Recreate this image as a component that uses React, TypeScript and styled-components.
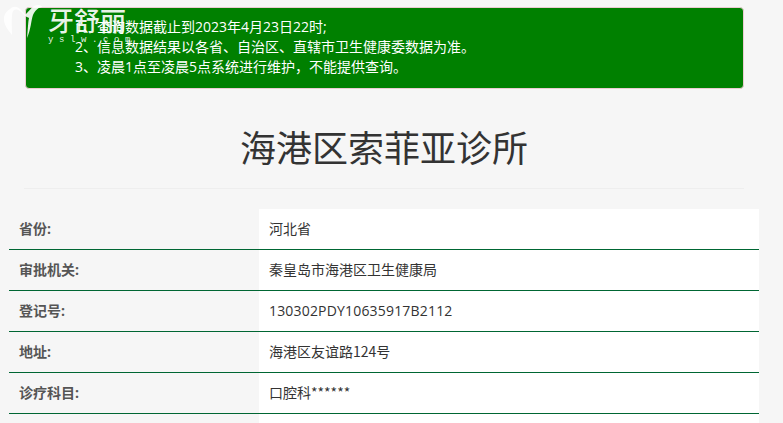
import React from 'react'
import styled, { createGlobalStyle } from 'styled-components'

interface InfoRow {
  label: string
  value: string
  code?: boolean
}

const rows: InfoRow[] = [
  { label: '省份:', value: '河北省' },
  { label: '审批机关:', value: '秦皇岛市海港区卫生健康局' },
  { label: '登记号:', value: '130302PDY10635917B2112', code: true },
  { label: '地址:', value: '海港区友谊路124号' },
  { label: '诊疗科目:', value: '口腔科******' },
  { label: '', value: '' },
]

const notices = [
  '1、查询数据截止到2023年4月23日22时;',
  '2、信息数据结果以各省、自治区、直辖市卫生健康委数据为准。',
  '3、凌晨1点至凌晨5点系统进行维护，不能提供查询。',
]

const GlobalStyle = createGlobalStyle`
  html, body {
    margin: 0;
    height: 423px;
    overflow: hidden;
    background-color: #f6f6f6;
    font-family: "Open Sans", "Noto Sans CJK SC", sans-serif;
    color: #333;
  }
`

const Page = styled.div`
  position: relative;
  padding-top: 7px;
`

const Logo = styled.div`
  position: absolute;
  top: 2px;
  left: 2px;
  display: flex;
  color: rgba(255, 255, 255, 0.92);
`

const LogoText = styled.div`
  display: flex;
  flex-direction: column;
  margin-left: 1px;
`

const LogoName = styled.span`
  margin-top: 2px;
  font-family: "Noto Sans CJK SC", serif;
  font-size: 26px;
  line-height: 32px;
  font-weight: 500;
`

const LogoDomain = styled.span`
  font-family: "Liberation Mono", monospace;
  font-size: 9px;
  line-height: 10px;
  letter-spacing: 5.6px;
  margin-top: -1px;
`

const Alert = styled.div`
  box-sizing: border-box;
  width: 719px;
  height: 82px;
  margin-left: 25px;
  padding: 9px 0 0 49px;
  background-color: #008000;
  border: 1px solid #ebccd1;
  border-radius: 4px;
  color: #fff;
  font-size: 14px;
  line-height: 20px;
`

const Title = styled.h1`
  width: 768px;
  margin: 35px 0 0;
  font-size: 36px;
  font-weight: 400;
  line-height: 50px;
  text-align: center;
  color: #333;
`

const Divider = styled.hr`
  width: 720px;
  margin: 14px 0 20px 24px;
  border: 0;
  border-top: 1px solid #eee;
`

const Table = styled.div`
  width: 750px;
  margin-left: 9px;
`

const Row = styled.div`
  display: grid;
  grid-template-columns: 250px 500px;
  height: 41px;
  box-sizing: border-box;
  border-bottom: 1px solid #006633;
  font-size: 14px;
`

const Label = styled.div`
  display: flex;
  align-items: center;
  padding: 0 0 2px 10px;
  font-weight: 700;
  color: #555;
`

const Value = styled.div<{ $code?: boolean }>`
  display: flex;
  align-items: center;
  padding: 0 0 2px 10px;
  background-color: #fff;
  color: #333;
  font-family: ${(p) => (p.$code ? '"Open Sans"' : '"Noto Sans CJK SC"')}, sans-serif;
  letter-spacing: ${(p) => (p.$code ? '0.18px' : '0')};
`

const App: React.FC = () => {
  return (
    <Page>
      <GlobalStyle />
      <Alert>
        {notices.map((notice) => (
          <div key={notice}>{notice}</div>
        ))}
      </Alert>
      <Logo>
        <svg width="45" height="40" viewBox="0 0 45 40">
          <path
            d="M8 7 C12 3 17 5 20 9 C22 12 23 13 24 12 C28 8 31 3 36 3 C39 3 40 4 40 5 C35 6 33 9 31 13 C29 19 29 27 25 36 C26 27 26 20 27 16 C26 15 24 15 22 13 C18 8 14 6 11 9 C9 14 10 24 10 33 C6 28 1 22 2 15 C3 11 5 9 8 7 Z"
            fill="#fff"
            opacity="0.9"
          />
        </svg>
        <LogoText>
          <LogoName>牙舒丽</LogoName>
          <LogoDomain>yslw.com</LogoDomain>
        </LogoText>
      </Logo>
      <Title>海港区索菲亚诊所</Title>
      <Divider />
      <Table>
        {rows.map((row) => (
          <Row key={row.label}>
            <Label>{row.label}</Label>
            <Value $code={row.code}>{row.value}</Value>
          </Row>
        ))}
      </Table>
    </Page>
  )
}

export default App
